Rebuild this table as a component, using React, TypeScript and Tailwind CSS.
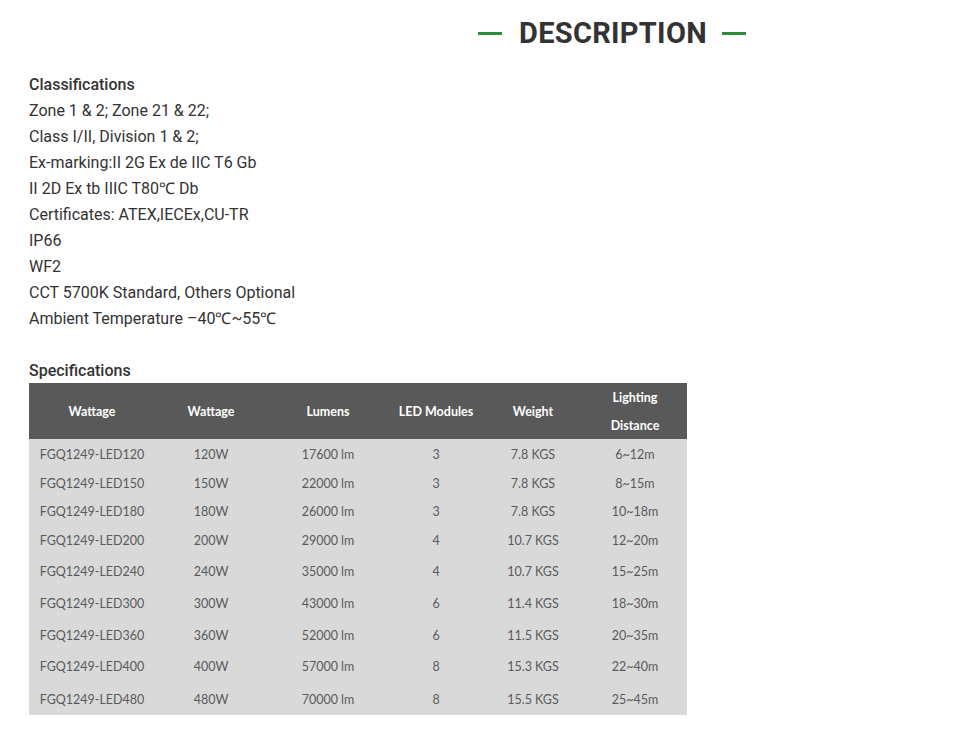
const rows = [
  ["FGQ1249-LED120", "120W", "17600 lm", "3", "7.8 KGS", "6~12m", "h-[29px]"],
  ["FGQ1249-LED150", "150W", "22000 lm", "3", "7.8 KGS", "8~15m", "h-[29px]"],
  ["FGQ1249-LED180", "180W", "26000 lm", "3", "7.8 KGS", "10~18m", "h-[28px]"],
  ["FGQ1249-LED200", "200W", "29000 lm", "4", "10.7 KGS", "12~20m", "h-[30px]"],
  ["FGQ1249-LED240", "240W", "35000 lm", "4", "10.7 KGS", "15~25m", "h-[32px]"],
  ["FGQ1249-LED300", "300W", "43000 lm", "6", "11.4 KGS", "18~30m", "h-[32px]"],
  ["FGQ1249-LED360", "360W", "52000 lm", "6", "11.5 KGS", "20~35m", "h-[31px]"],
  ["FGQ1249-LED400", "400W", "57000 lm", "8", "15.3 KGS", "22~40m", "h-[32px]"],
  ["FGQ1249-LED480", "480W", "70000 lm", "8", "15.5 KGS", "25~45m", "h-[33px]"],
];

const classifications = [
  "Zone 1 & 2; Zone 21 & 22;",
  "Class I/II, Division 1 & 2;",
  "Ex-marking:II 2G Ex de IIC T6 Gb",
  "II 2D Ex tb IIIC T80℃ Db",
  "Certificates: ATEX,IECEx,CU-TR",
  "IP66",
  "WF2",
  "CCT 5700K Standard, Others Optional",
  "Ambient Temperature –40℃~55℃",
];

export default function App() {
  return (
    <main className="bg-white min-h-[750px] w-[979px] text-[#333] font-['Roboto',sans-serif]">
      {/* heading */}
      <div className="flex items-center pl-[478px] pt-[14px] h-[52px]">
        <span className="w-[24px] h-[3px] bg-[#2e8b3e]"></span>
        <h2 className="ml-[17px] mr-[15px] text-[29px] leading-[38px] font-bold tracking-[0.3px] text-[#333]">
          DESCRIPTION
        </h2>
        <span className="w-[24px] h-[3px] bg-[#2e8b3e]"></span>
      </div>

      <section className="pl-[29px] pt-[20px] text-[16px] leading-[26px]">
        <h4 className="font-medium">Classifications</h4>
        {classifications.map((c) => (
          <p key={c}>{c}</p>
        ))}
        <h4 className="font-medium mt-[26px]">Specifications</h4>

        {/* table */}
        <div className="w-[658px] -mt-[1px] font-['Lato',sans-serif]">
          <div className="flex h-[56px] pt-[2px] bg-[#595959] text-white text-[12.5px] font-bold items-center text-center">
            <div className="w-[126px]">Wattage</div>
            <div className="w-[112px]">Wattage</div>
            <div className="w-[122px]">Lumens</div>
            <div className="w-[94px]">LED Modules</div>
            <div className="w-[100px]">Weight</div>
            <div className="w-[104px] leading-[28px]">
              Lighting
              <br />
              Distance
            </div>
          </div>
          <div className="bg-[#d9d9d9] text-[#595959] text-[12.5px]">
            {rows.map((r) => (
              <div key={r[0]} className={`flex items-center pt-[2px] text-center ${r[6]}`}>
                <div className="w-[126px]">{r[0]}</div>
                <div className="w-[112px]">{r[1]}</div>
                <div className="w-[122px]">{r[2]}</div>
                <div className="w-[94px]">{r[3]}</div>
                <div className="w-[100px]">{r[4]}</div>
                <div className="w-[104px]">{r[5]}</div>
              </div>
            ))}
          </div>
        </div>
      </section>
    </main>
  );
}
